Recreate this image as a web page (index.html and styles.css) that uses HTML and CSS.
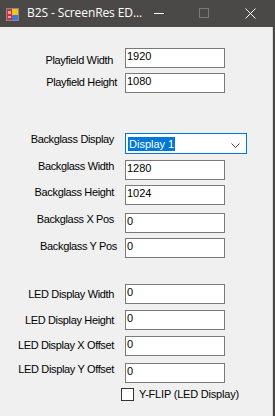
FILE: index.html
```html
<!DOCTYPE html>
<html>
<head>
<meta charset="utf-8">
<link rel="stylesheet" href="styles.css">
</head>
<body>
<div class="window">
  <div class="titlebar">
    <svg class="appicon" width="13" height="13" viewBox="0 0 13 13">
      <rect x="0.5" y="0.5" width="12" height="12" fill="#d8d8d8" stroke="#8a8a8a"/>
      <rect x="1" y="1" width="5" height="11" fill="#c8303a"/>
      <rect x="2" y="3" width="3" height="3" fill="#f0a0a0"/>
      <rect x="2" y="8" width="3" height="2" fill="#f0a0a0"/>
      <rect x="6" y="1" width="6" height="6" fill="#f5c21b"/>
      <rect x="6" y="7" width="6" height="5" fill="#3b78d8"/>
    </svg>
    <span class="title">B2S - ScreenRes ED...</span>
    <div class="controls">
      <span class="ctl min"></span>
      <span class="ctl max"></span>
      <svg class="ctl close" width="11" height="11" viewBox="0 0 11 11">
        <path d="M0.5 0.5 L10.5 10.5 M10.5 0.5 L0.5 10.5" stroke="#ffffff" stroke-width="1" fill="none"/>
      </svg>
    </div>
  </div>
  <div class="client">
    <div class="row r-pw"><span class="label pt6 flush">Playfield Width</span><div class="field">1920</div></div>
    <div class="row r-ph"><span class="label pt3 nudge">Playfield Height</span><div class="field">1080</div></div>

    <div class="row r-bd"><span class="label pt0">Backglass Display</span>
      <div class="combo"><span class="sel">Display 1</span>
        <svg class="chev" width="9" height="5" viewBox="0 0 9 5"><path d="M0.5 0.5 L4.5 4.5 L8.5 0.5" stroke="#444" fill="none"/></svg>
      </div>
    </div>
    <div class="row r-bw"><span class="label pt0">Backglass Width</span><div class="field">1280</div></div>
    <div class="row r-bh"><span class="label pt1">Backglass Height</span><div class="field">1024</div></div>
    <div class="row r-bx"><span class="label pt0">Backglass X Pos</span><div class="field">0</div></div>
    <div class="row r-by"><span class="label pt2 nudge">Backglass Y Pos</span><div class="field">0</div></div>

    <div class="row r-lw"><span class="label pt4">LED Display Width</span><div class="field">0</div></div>
    <div class="row r-lh"><span class="label pt4">LED Display Height</span><div class="field">0</div></div>
    <div class="row r-lx"><span class="label pt3">LED Display X Offset</span><div class="field">0</div></div>
    <div class="row r-ly"><span class="label pt0">LED Display Y Offset</span><div class="field">0</div></div>

    <div class="checkrow"><span class="box"></span><span class="clabel">Y-FLIP (LED Display)</span></div>
  </div>
</div>
</body>
</html>
```

FILE: styles.css
```css
html, body {
  margin: 0;
  padding: 0;
  background: #4b4947;
}
.window {
  width: 275px;
  height: 416px;
  display: flex;
  flex-direction: column;
  background: #4b4947;
  overflow: hidden;
}
.titlebar {
  height: 27px;
  flex: none;
  display: flex;
  align-items: flex-start;
  background: #4b4947;
  color: #ffffff;
}
.appicon {
  margin: 8px 0 0 6px;
  flex: none;
}
.title {
  margin: 5px 0 0 8px;
  font-family: "Open Sans", "Noto Sans", sans-serif;
  font-size: 12px;
  line-height: 16px;
  white-space: nowrap;
  letter-spacing: -0.1px;
}
.controls {
  margin-left: auto;
  display: flex;
  align-items: flex-start;
  padding-right: 19px;
}
.ctl {
  display: block;
  flex: none;
}
.min {
  width: 10px;
  height: 1px;
  background: #ffffff;
  margin-top: 13px;
}
.max {
  width: 8px;
  height: 8px;
  border: 1px solid #7a7876;
  margin: 8px 0 0 35px;
}
.close {
  margin: 8px 0 0 36px;
}
.client {
  flex: 1;
  width: 273px;
  background: #f0f0f0;
  border-right: 1px solid #d6d6d6;
  box-sizing: border-box;
  font-family: "Liberation Sans", Arial, sans-serif;
  font-size: 11px;
  color: #000000;
  padding-top: 21px;
}
.row {
  display: flex;
  align-items: flex-start;
  height: 20px;
}
.label {
  width: 117px;
  box-sizing: border-box;
  padding-right: 3px;
  text-align: right;
  line-height: 13px;
  white-space: nowrap;
  letter-spacing: -0.35px;
  flex: none;
}
.label.nudge { padding-right: 0; }
.label.flush { padding-right: 4px; }
.pt0 { padding-top: 0; }
.pt1 { padding-top: 1px; }
.pt2 { padding-top: 2px; }
.pt3 { padding-top: 3px; }
.pt4 { padding-top: 4px; }
.pt6 { padding-top: 6px; }
.field {
  margin-left: 8px;
  width: 100px;
  height: 20px;
  box-sizing: border-box;
  border: 1px solid #7a7a7a;
  background: #ffffff;
  padding: 3px 0 0 1px;
  line-height: 9px;
  flex: none;
  overflow: hidden;
}
.combo {
  margin-left: 8px;
  width: 122px;
  height: 21px;
  box-sizing: border-box;
  border: 1px solid #0078d7;
  background: #ffffff;
  display: flex;
  align-items: flex-start;
  padding: 3px 0 0 2px;
  flex: none;
}
.sel {
  background: #0078d7;
  color: #ffffff;
  height: 14px;
  line-height: 14px;
  padding: 0 1px 0 1px;
}
.chev {
  margin: 6px 6px 0 auto;
}
.r-pw { margin-top: 0; }
.r-ph { margin-top: 5px; }
.r-bd { margin-top: 40px; }
.r-bw { margin-top: 7px; }
.r-bh { margin-top: 5px; }
.r-bx { margin-top: 8px; }
.r-by { margin-top: 5px; }
.r-lw { margin-top: 26px; }
.r-lh { margin-top: 6px; }
.r-lx { margin-top: 6px; }
.r-ly { margin-top: 7px; }
.checkrow {
  display: flex;
  align-items: flex-start;
  margin: 5px 0 0 121px;
}
.box {
  width: 13px;
  height: 13px;
  box-sizing: border-box;
  border: 1px solid #333333;
  background: #ffffff;
  flex: none;
}
.clabel {
  margin-left: 5px;
  line-height: 13px;
  letter-spacing: -0.2px;
}
```
